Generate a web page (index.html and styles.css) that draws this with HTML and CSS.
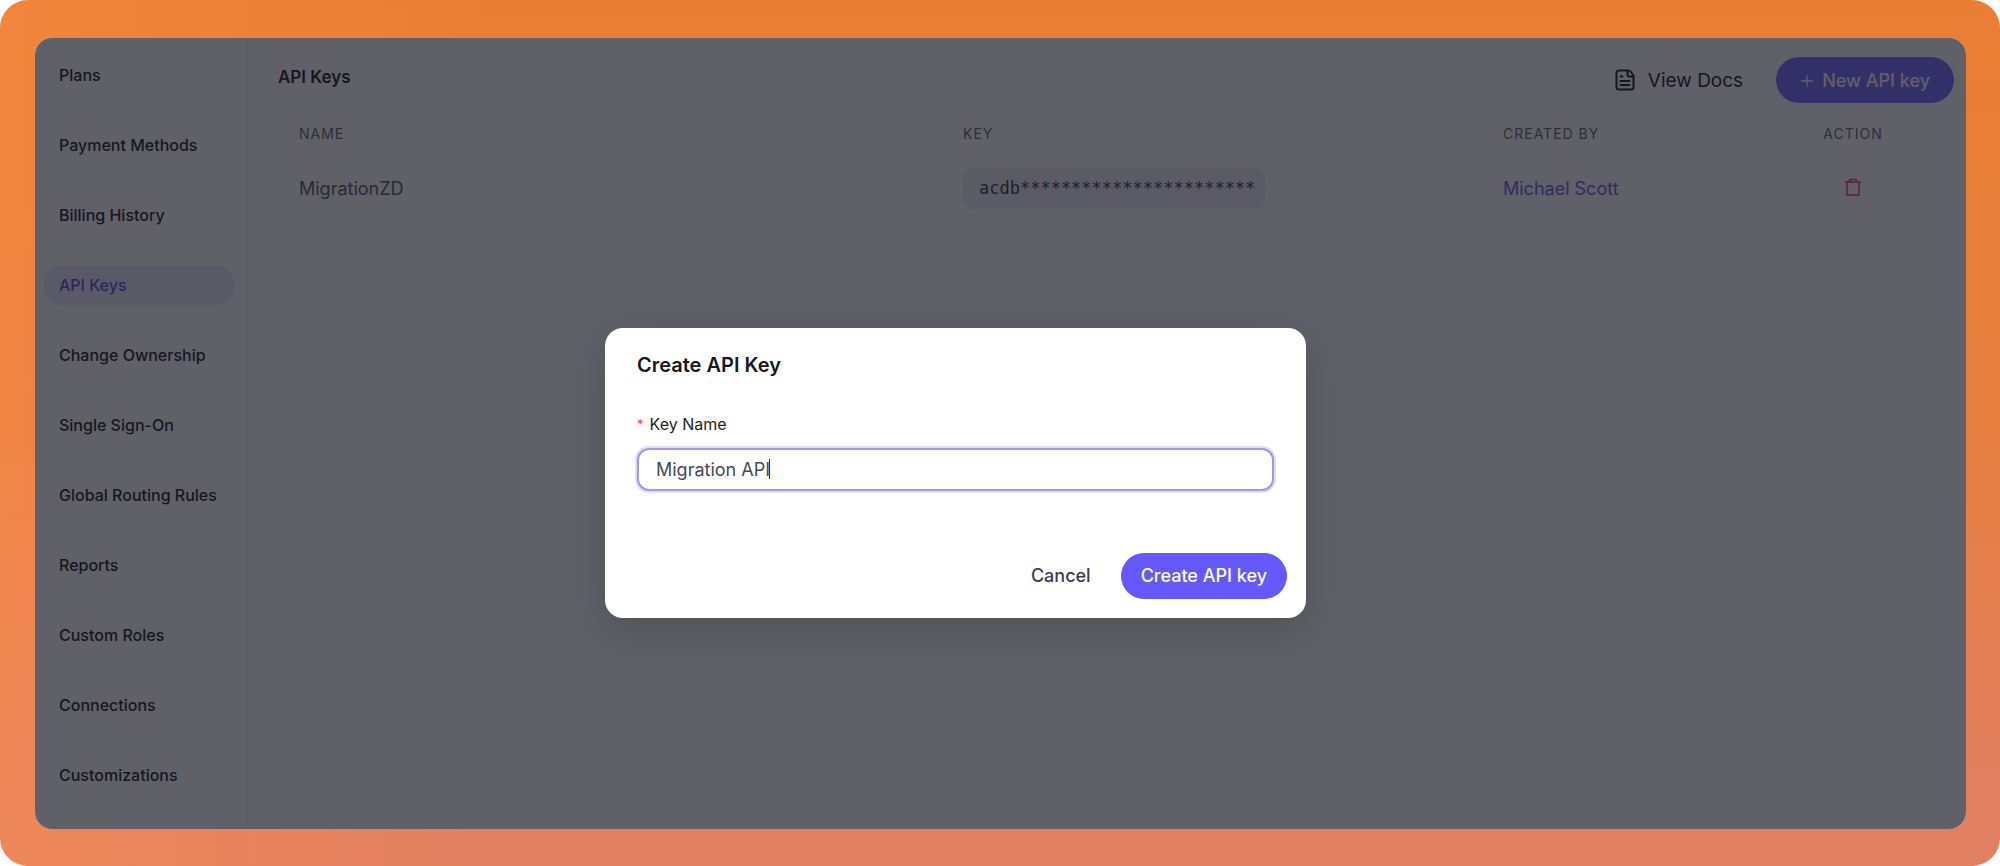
FILE: index.html
```html
<!DOCTYPE html>
<html lang="en">
<head>
  <meta charset="UTF-8">
  <meta name="viewport" content="width=device-width, initial-scale=1.0">
  <title>API Keys</title>
  <link rel="stylesheet" href="styles.css">
</head>
<body>
  <div class="frame">
    <div class="window">
      <nav class="sidebar">
        <a href="#">Plans</a>
        <a href="#">Payment Methods</a>
        <a href="#">Billing History</a>
        <a href="#" class="active">API Keys</a>
        <a href="#">Change Ownership</a>
        <a href="#">Single Sign-On</a>
        <a href="#">Global Routing Rules</a>
        <a href="#">Reports</a>
        <a href="#">Custom Roles</a>
        <a href="#">Connections</a>
        <a href="#">Customizations</a>
      </nav>

      <main class="content">
        <header class="header">
          <h1>API Keys</h1>
          <div class="actions">
            <a href="#" class="docs">
              <svg width="20" height="22" viewBox="0 0 20 22" fill="none" stroke="currentColor" stroke-width="2" stroke-linecap="round" stroke-linejoin="round">
                <path d="M13 1.500H4A2.500 2.500 0 0 0 1.500 4v14A2.500 2.500 0 0 0 4 20.500h12a2.500 2.500 0 0 0 2.500-2.500V6.500L16 3Q15 1.500 13 1.500z"/>
                <path d="M12.500 2v3.500a2 2 0 0 0 2 2h4"/>
                <path d="M5.500 7.500h2M5.500 12h9M5.500 16h9"/>
              </svg>
              View Docs
            </a>
            <button class="button new-key">
              <svg width="14" height="14" viewBox="0 0 14 14" fill="none" stroke="currentColor" stroke-width="1.300">
                <path d="M7 2v12M1 8h12"/>
              </svg>
              New API key
            </button>
          </div>
        </header>

        <table class="keys">
          <thead>
            <tr>
              <th class="col-name">Name</th>
              <th class="col-key">Key</th>
              <th class="col-user">Created by</th>
              <th class="col-action">Action</th>
            </tr>
          </thead>
          <tbody>
            <tr>
              <td>MigrationZD</td>
              <td><code>acdb***********************</code></td>
              <td><a href="#">Michael Scott</a></td>
              <td class="col-action">
                <button class="delete" aria-label="Delete key">
                  <svg width="18" height="20" viewBox="0 0 18 20" fill="none" stroke="currentColor" stroke-width="1.500" stroke-linejoin="round">
                    <path d="M1 5h16M3 5v13h12V5M5.500 5V3.500a1 1 0 0 1 1-1h5a1 1 0 0 1 1 1V5"/>
                  </svg>
                </button>
              </td>
            </tr>
          </tbody>
        </table>
      </main>

      <div class="overlay">
        <form class="modal" role="dialog" aria-labelledby="modalTitle">
          <h2 id="modalTitle">Create API Key</h2>
          <label for="keyName"><span class="required">*</span>Key Name</label>
          <div class="field">
            <input type="text" id="keyName" value="Migration API">
            <span class="caret"></span>
          </div>
          <div class="footer">
            <button type="button" class="button cancel">Cancel</button>
            <button type="button" class="button create">Create API key</button>
          </div>
        </form>
      </div>
    </div>
  </div>
</body>
</html>
```
FILE: styles.css
```css
* {
  box-sizing: border-box;
}
body {
  margin: 0;
  background: #fff;
  font-family: Inter, "Liberation Sans", sans-serif;
  color: #000;
}
a {
  color: inherit;
  text-decoration: none;
}
.frame {
  display: flex;
  min-height: 100vh;
  padding: 38px 34px 37px 35px;
  border-radius: 28px;
  background: linear-gradient(90deg, rgba(255, 145, 75, 0.4), rgba(255, 145, 75, 0) 25%), linear-gradient(#e97e33, #e67e40 50%, #e28062 92%);
}
.window {
  position: relative;
  display: flex;
  flex: 1;
  border-radius: 17px;
  background: #fff;
  overflow: hidden;
}

/* sidebar */
.sidebar {
  display: flex;
  flex-direction: column;
  gap: 30px;
  width: 213px;
  padding: 17px 12px 17px 8px;
  border-right: 1px solid #f0f0e4;
}
.sidebar a {
  padding: 0 16px;
  border-radius: 20px;
  font-size: 16px;
  line-height: 40px;
  font-weight: 500;
  white-space: nowrap;
}
.sidebar .active {
  background: #ebe9fb;
  color: #4c30e4;
}

/* content */
.content {
  flex: 1;
  padding: 19px 12px 0 30px;
}
.header {
  display: flex;
  justify-content: space-between;
}
.header h1 {
  margin: 0;
  font-size: 17px;
  line-height: 40px;
  font-weight: 600;
}
.actions {
  display: flex;
  align-items: center;
  gap: 33px;
}
.docs {
  display: flex;
  align-items: center;
  gap: 13px;
  font-size: 19px;
}
.button {
  height: 46px;
  border: none;
  border-radius: 23px;
  font-family: inherit;
  font-size: 18px;
  font-weight: 500;
  cursor: pointer;
}
.new-key {
  display: flex;
  align-items: center;
  gap: 8px;
  padding: 0 24px;
  background: #6558ff;
  color: #fff;
}
.keys {
  width: 100%;
  border-collapse: collapse;
  table-layout: fixed;
}
.keys th,
.keys td {
  padding: 0 0 0 21px;
  border-bottom: 1px solid #f0f0e4;
  text-align: left;
}
.keys th {
  height: 52px;
  padding-top: 10px;
  font-size: 14px;
  font-weight: 400;
  letter-spacing: 1px;
  text-transform: uppercase;
  color: #555;
}
.keys td {
  height: 67px;
  font-size: 18px;
  color: #444450;
}
.keys td a {
  color: #5f45e8;
}
.col-name {
  width: 664px;
}
.col-key {
  width: 540px;
}
.col-user {
  width: 270px;
}
.keys .col-action {
  padding-left: 0;
  text-align: center;
}
.keys code {
  display: inline-block;
  padding: 0 10px 0 16px;
  border-radius: 11px;
  background: #eeeef6;
  color: #222233;
  font-family: "DejaVu Sans Mono", monospace;
  font-size: 17px;
  line-height: 41px;
}
.delete {
  padding: 0;
  border: none;
  background: none;
  color: #f0204a;
  cursor: pointer;
}
.delete svg {
  display: block;
}

/* modal */
.overlay {
  position: absolute;
  inset: 0;
  display: flex;
  align-items: center;
  justify-content: center;
  padding: 78px 90px 0 0;
  background: rgba(31, 31, 42, 0.71);
}
.modal {
  width: 701px;
  padding: 24px 32px 19px;
  border-radius: 18px;
  background: #fff;
  box-shadow: 0 12px 40px rgba(0, 0, 0, 0.16);
}
.modal h2 {
  margin: 0 0 32px;
  font-size: 20px;
  line-height: 26px;
  font-weight: 600;
  color: #18181b;
}
.modal label {
  display: flex;
  gap: 6px;
  margin-bottom: 10px;
  font-size: 16px;
  line-height: 28px;
  color: #1f1f24;
}
.required {
  font-size: 13px;
  color: #f04438;
}
.field {
  position: relative;
}
.field input {
  display: block;
  width: 100%;
  height: 43px;
  padding: 0 17px;
  border: 2px solid #a095f0;
  border-radius: 12px;
  outline: none;
  box-shadow: 0 0 0 2px #e2dcfd;
  font-family: inherit;
  font-size: 18px;
  color: #444a5a;
}
.caret {
  position: absolute;
  top: 11px;
  left: 132px;
  width: 1px;
  height: 20px;
  background: #333;
}
.footer {
  display: flex;
  justify-content: flex-end;
  gap: 8px;
  margin: 62px -13px 0 0;
}
.cancel {
  padding: 0 22px;
  background: none;
  color: #3a3d4f;
}
.create {
  padding: 0 20px;
  background: #6558ff;
  color: #fff;
}
```
